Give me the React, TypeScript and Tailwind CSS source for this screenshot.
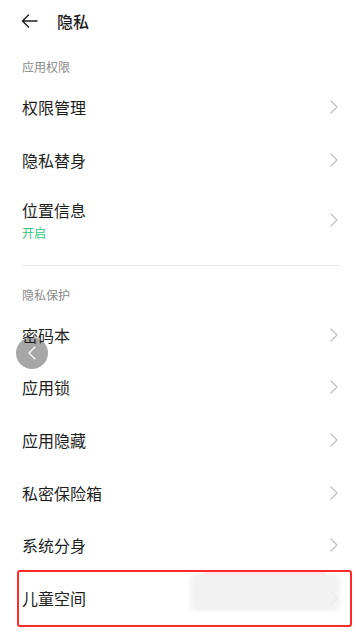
import React from "react";

const Chevron = () => (
  <svg width="8" height="14" viewBox="0 0 8 14" fill="none">
    <path d="M1 1 L7 7 L1 13" stroke="#c2c2c2" strokeWidth="1.3" strokeLinecap="round" strokeLinejoin="round" />
  </svg>
);

const Row = ({ title, sub }: { title: string; sub?: string }) =>
  sub ? (
    <div className="flex items-center justify-between pl-[22px] pr-[18px] pt-[13px] pb-[14px]">
      <div className="flex flex-col">
        <span className="relative z-10 text-[16px] leading-[22px] text-[#1e1e1e]">{title}</span>
        <span className="mt-[4px] text-[12px] leading-[16px] text-[#2cc77a]">{sub}</span>
      </div>
      <Chevron />
    </div>
  ) : (
    <div className="flex h-[52.7px] items-center justify-between pl-[22px] pr-[18px]">
      <span className="relative z-10 text-[16px] leading-[22px] text-[#1e1e1e]">{title}</span>
      <Chevron />
    </div>
  );

export default function App() {
  return (
    <div
      className="relative w-[356px] h-[635px] overflow-hidden bg-white"
      style={{ fontFamily: '"Noto Sans CJK SC", "Noto Sans", sans-serif' }}
    >
      <div className="flex h-[42px] items-center pl-[21px]">
        <svg width="17" height="14" viewBox="0 0 17 14" fill="none">
          <path d="M16 7 H1.5 M7.5 1 L1.5 7 L7.5 13" stroke="#222" strokeWidth="1.5" strokeLinecap="round" strokeLinejoin="round" />
        </svg>
        <span className="ml-[19px] text-[16px] leading-[22px] font-medium text-[#1e1e1e]">隐私</span>
      </div>

      <div className="pl-[22px] pt-[17px] pb-[6px] text-[12px] leading-[16px] text-[#8a8a8a]">应用权限</div>
      <Row title="权限管理" />
      <Row title="隐私替身" />
      <Row title="位置信息" sub="开启" />

      <div className="ml-[22px] mr-[16px] mt-[10px] h-px bg-[#e8e8e8]" />

      <div className="pl-[22px] pt-[21px] pb-[5px] text-[12px] leading-[16px] text-[#8a8a8a]">隐私保护</div>
      <Row title="密码本" />
      <Row title="应用锁" />
      <Row title="应用隐藏" />
      <Row title="私密保险箱" />
      <Row title="系统分身" />
      <Row title="儿童空间" />

      <div className="absolute left-[16px] top-[337px] flex h-[32px] w-[32px] items-center justify-center rounded-full bg-[#9d9d9d]/90">
        <svg width="8" height="14" viewBox="0 0 8 14" fill="none">
          <path d="M7 1 L1 7 L7 13" stroke="#ffffff" strokeWidth="1.2" strokeLinecap="round" strokeLinejoin="round" />
        </svg>
      </div>

      <div className="absolute left-[190px] top-[573px] h-[38px] w-[150px] rounded-[6px] bg-[#f1f1f1]/90 blur-[2px]" />
      <div className="absolute left-[205px] top-[572px] h-[3px] w-[120px] bg-[#fbe3e3] blur-[1px]" />

      <div className="absolute left-[17px] top-[570px] h-[57px] w-[335px] rounded-[3px] border-2 border-[#ff2a2a]" />
    </div>
  );
}
